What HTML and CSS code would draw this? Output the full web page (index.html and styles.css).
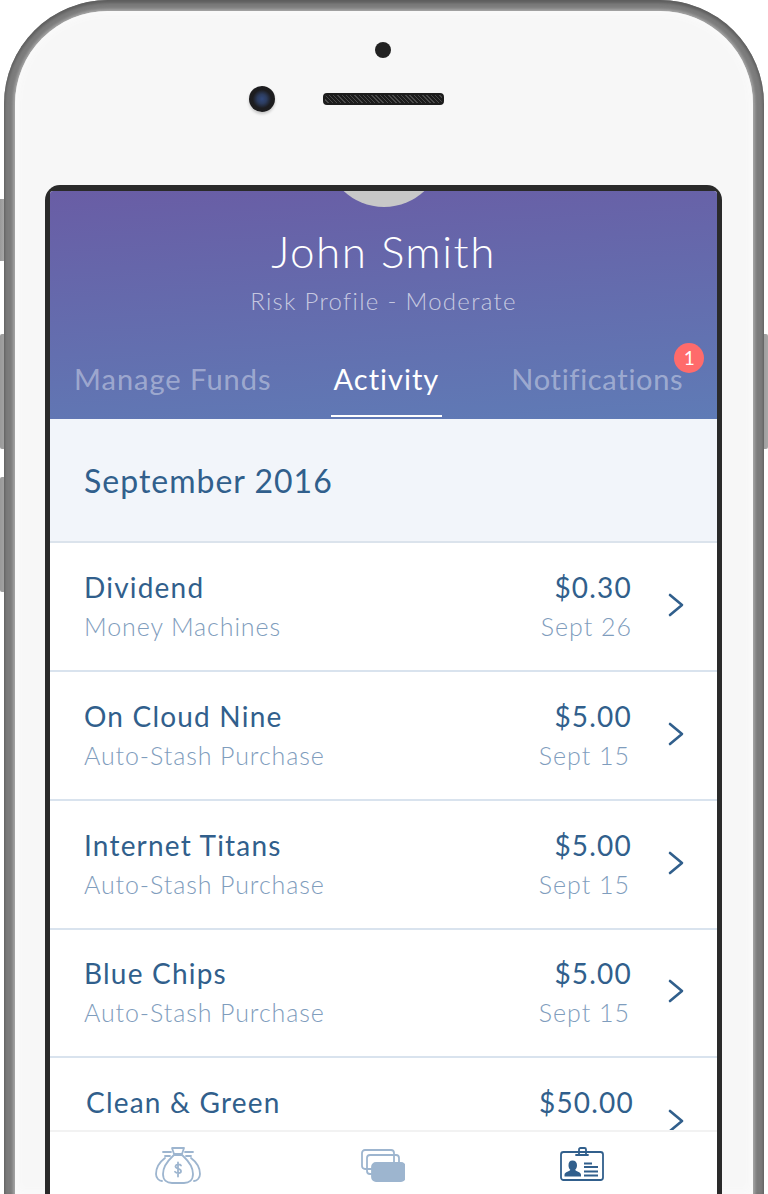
FILE: index.html
```html
<!DOCTYPE html>
<html lang="en">
  <head>
    <meta charset="UTF-8" />
    <meta name="viewport" content="width=device-width, initial-scale=1.0" />
    <title>Activity</title>
    <link rel="stylesheet" href="styles.css">
  </head>
  <body>
    <div class="side-btn side-btn-mute"></div>
    <div class="side-btn side-btn-up"></div>
    <div class="side-btn side-btn-down"></div>
    <div class="side-btn side-btn-power"></div>

    <div class="phone">
      <div class="face">
        <div class="sensors">
          <div class="front-dot"></div>
          <div class="sensor-row">
            <div class="lens"></div>
            <div class="speaker"></div>
          </div>
        </div>

        <div class="screen">
          <div class="screen-inner">
            <header class="profile">
              <div class="avatar"></div>
              <h1 class="profile-name">John Smith</h1>
              <p class="profile-risk">Risk Profile - Moderate</p>
              <nav class="tabs">
                <a class="tab tab-funds">Manage Funds</a>
                <a class="tab tab-activity">Activity</a>
                <a class="tab tab-notifications">Notifications<span class="badge">1</span></a>
              </nav>
            </header>

            <div class="month">September 2016</div>

            <div class="list">
              <div class="row row-a">
                <div class="row-left">
                  <div class="row-title">Dividend</div>
                  <div class="row-sub">Money Machines</div>
                </div>
                <div class="row-right">
                  <div class="row-amount">$0.30</div>
                  <div class="row-date">Sept 26</div>
                </div>
                <svg class="chevron" viewBox="0 0 16 24"><path d="M2 2l12 10L2 22"/></svg>
              </div>
              <div class="row row-a">
                <div class="row-left">
                  <div class="row-title">On Cloud Nine</div>
                  <div class="row-sub">Auto-Stash Purchase</div>
                </div>
                <div class="row-right row-right-15">
                  <div class="row-amount">$5.00</div>
                  <div class="row-date">Sept 15</div>
                </div>
                <svg class="chevron" viewBox="0 0 16 24"><path d="M2 2l12 10L2 22"/></svg>
              </div>
              <div class="row row-b">
                <div class="row-left">
                  <div class="row-title">Internet Titans</div>
                  <div class="row-sub">Auto-Stash Purchase</div>
                </div>
                <div class="row-right row-right-15">
                  <div class="row-amount">$5.00</div>
                  <div class="row-date">Sept 15</div>
                </div>
                <svg class="chevron" viewBox="0 0 16 24"><path d="M2 2l12 10L2 22"/></svg>
              </div>
              <div class="row row-c">
                <div class="row-left">
                  <div class="row-title">Blue Chips</div>
                  <div class="row-sub">Auto-Stash Purchase</div>
                </div>
                <div class="row-right row-right-15">
                  <div class="row-amount">$5.00</div>
                  <div class="row-date">Sept 15</div>
                </div>
                <svg class="chevron" viewBox="0 0 16 24"><path d="M2 2l12 10L2 22"/></svg>
              </div>
              <div class="row row-last">
                <div class="row-left">
                  <div class="row-title">Clean &amp; Green</div>
                </div>
                <div class="row-right">
                  <div class="row-amount">$50.00</div>
                </div>
                <svg class="chevron" viewBox="0 0 16 24"><path d="M2 2l12 10L2 22"/></svg>
              </div>
            </div>

            <div class="tabbar">
              <svg class="bar-icon icon-bag" viewBox="0 0 46 38">
                <path d="M17 1h12l-2 6h-8z"/>
                <path d="M8 5h8M38 5h-8M10 9h5M36 9h-5"/>
                <path d="M19 8c-3 3-11 9-11 19 0 6 4 9 9 9h12c5 0 9-3 9-9 0-10-8-16-11-19z"/>
                <path d="M10 11C6 14 1 20 1 27c0 4 3 7 6 7M36 11c4 3 9 9 9 16 0 4-3 7-6 7"/>
                <path d="M26 18.500c-1-1.500-5-1.500-5.500.7-.5 3 5.500 2 5.500 5 0 2.500-4.500 2.500-6 .6M23 15.500v14"/>
              </svg>
              <svg class="bar-icon icon-cards" viewBox="0 0 44 34">
                <rect class="card-line" x="1" y="1" width="32" height="19" rx="3"/>
                <rect class="card-line" x="6" y="6" width="32" height="19" rx="3"/>
                <rect class="card-fill" x="11" y="14" width="33" height="18" rx="4"/>
              </svg>
              <svg class="bar-icon icon-badge" viewBox="0 0 44 34">
                <rect x="1" y="5" width="42" height="28" rx="2.500"/>
                <path d="M16 8h12M19 8V2.500A1.500 1.500 0 0 1 20.500 1h4A1.500 1.500 0 0 1 26 2.500V8"/>
                <path class="badge-fill" d="M12.500 13.500c2.800 0 4.500 2 4.500 4.800 0 2-.8 3.600-1.800 4.500 0 1.500 5.800 2 5.800 5v1.700H4.500v-1.700c0-3 5.800-3.500 5.800-5-1-.9-1.800-2.500-1.800-4.500 0-2.800 1.200-4.800 4-4.800z"/>
                <path class="badge-lines" d="M24 16.500h8M24 20h14M24 24.500h14M24 28.500h14"/>
              </svg>
            </div>
          </div>
        </div>
      </div>
    </div>
  </body>
</html>
```

FILE: styles.css
```css
html,
body {
  margin: 0;
  height: 1194px;
  overflow: hidden;
  background-color: #fff;
}
body {
  font-family: Lato, "Open Sans", sans-serif;
  position: relative;
}

/* hardware */
.side-btn {
  position: absolute;
  background: linear-gradient(90deg, #9a9a9a, #a8a8a8);
}
.side-btn-mute {
  left: 0;
  top: 199px;
  width: 4px;
  height: 62px;
}
.side-btn-up {
  left: 0;
  top: 334px;
  width: 7px;
  height: 115px;
  border-radius: 2px;
}
.side-btn-down {
  left: 0;
  top: 477px;
  width: 7px;
  height: 115px;
  border-radius: 2px;
}
.side-btn-power {
  right: 0;
  top: 334px;
  width: 7px;
  height: 115px;
  border-radius: 2px;
}
.phone {
  margin-left: 4px;
  width: 760px;
  height: 1194px;
  padding: 11px 11px 0;
  box-sizing: border-box;
  border-radius: 104px 104px 0 0;
  background-color: #7c7c7c;
  position: relative;
  box-shadow: inset 0 2px 3px 1px #5e5e5e;
  overflow: hidden;
}
.face {
  height: 1183px;
  background-color: #f7f7f7;
  border-radius: 93px 93px 0 0;
  box-shadow: 0 0 3px 2px #a6a6a6, inset 0 0 8px 2px #fbfbfb;
}
.sensors {
  height: 174px;
  box-sizing: border-box;
  padding-top: 31px;
}
.front-dot {
  width: 16px;
  height: 16px;
  margin-left: 360px;
  border-radius: 50%;
  background-color: #222;
}
.sensor-row {
  display: flex;
  align-items: center;
  gap: 48px;
  margin-top: 28px;
  padding-left: 234px;
}
.lens {
  width: 26px;
  height: 26px;
  border-radius: 50%;
  background: radial-gradient(circle, #32497c 0, #2c3c5e 25%, #1d1d20 50%, #1c1c1c 100%);
  box-shadow: 0 2px 3px rgba(0, 0, 0, 0.2);
}
.speaker {
  width: 121px;
  height: 12px;
  border-radius: 4px;
  box-sizing: border-box;
  border: 2px solid #1c1c1c;
  background: repeating-linear-gradient(45deg, #1c1c1c 0 2px, #4a4a4a 2px 3px);
}

/* screen */
.screen {
  margin-left: 30px;
  width: 677px;
  height: 1009px;
  box-sizing: border-box;
  padding: 6px 5px 0;
  background-color: #2a2a2a;
  border-radius: 15px 15px 0 0;
}
.screen-inner {
  height: 100%;
  background-color: #fff;
  border-radius: 3px 3px 0 0;
  overflow: hidden;
}
.profile {
  height: 228px;
  overflow: hidden;
  background: linear-gradient(176deg, #695da5, #5f7bb6);
  text-align: center;
}
.avatar {
  width: 118px;
  height: 118px;
  margin: -102px auto 0;
  border-radius: 50%;
  background-color: #c8c8c8;
}
.profile-name {
  margin: 18px 0 0;
  font-size: 44px;
  line-height: 52px;
  font-weight: 300;
  letter-spacing: 1.5px;
  color: #fff;
}
.profile-risk {
  margin: 9px 0 0;
  font-size: 24px;
  line-height: 30px;
  font-weight: 300;
  letter-spacing: 1.3px;
  color: rgba(255, 255, 255, 0.65);
}
.tabs {
  display: flex;
  margin-top: 45px;
  padding-left: 24px;
  font-size: 29px;
  line-height: 36px;
  letter-spacing: 1px;
}
.tab {
  color: rgba(255, 255, 255, 0.4);
  position: relative;
  padding-bottom: 18px;
}
.tab-activity {
  margin-left: 59px;
  padding: 0 3px 18px;
  color: #fff;
  border-bottom: 2px solid #fff;
}
.tab-notifications {
  margin-left: 69px;
  letter-spacing: 0.7px;
}
.badge {
  position: absolute;
  right: -21px;
  top: -18px;
  width: 30px;
  height: 30px;
  border-radius: 50%;
  background-color: #ff6b6b;
  color: #fff;
  font-size: 19px;
  line-height: 30px;
  text-align: center;
  letter-spacing: 0;
}

/* list */
.month {
  height: 124px;
  box-sizing: border-box;
  padding: 42px 0 0 34px;
  font-size: 32px;
  line-height: 40px;
  letter-spacing: 1px;
  color: #315f8c;
  background-color: #f2f5fa;
  border-bottom: 2px solid #dbe3ec;
}
.list {
  height: 587px;
  overflow: hidden;
}
.row {
  display: flex;
  align-items: flex-start;
  box-sizing: border-box;
  padding: 26px 33px 0 34px;
  border-bottom: 2px solid #d9e3ee;
}
.row-a {
  height: 129px;
}
.row-b {
  height: 129px;
}
.row-c {
  height: 128px;
  padding-top: 25px;
}
.row-last {
  height: 74px;
  padding-left: 36px;
  border-bottom: 0;
}
.row-left {
  flex: 1;
}
.row-right {
  text-align: right;
}
.row-right-15 .row-date {
  margin-right: 2px;
}
.row-last .row-right {
  margin-right: -2px;
}
.row-title,
.row-amount {
  font-size: 28px;
  line-height: 36px;
  letter-spacing: 1.2px;
  color: #315f8c;
}
.row-sub,
.row-date {
  margin-top: 5px;
  font-size: 25px;
  line-height: 32px;
  font-weight: 300;
  letter-spacing: 0.9px;
  color: #7f9dbd;
}
.row-date {
  letter-spacing: 1px;
}
.chevron {
  width: 16px;
  height: 24px;
  margin: 24px 0 0 36px;
  fill: none;
  stroke: #315f8c;
  stroke-width: 2.6;
  stroke-linecap: round;
  stroke-linejoin: round;
}
.row-c .chevron {
  margin-top: 24px;
}
.row-last .chevron {
  margin-top: 25px;
}

/* bottom nav */
.tabbar {
  height: 70px;
  box-sizing: border-box;
  border-top: 2px solid #f2f2f2;
  background-color: #fff;
  display: flex;
  align-items: flex-start;
  padding: 15px 0 0 105px;
}
.bar-icon {
  fill: none;
  stroke: #9db5cf;
  stroke-width: 1.8;
  stroke-linejoin: round;
  stroke-linecap: round;
}
.icon-bag {
  width: 46px;
  height: 38px;
}
.icon-cards {
  width: 44px;
  height: 34px;
  margin: 2px 0 0 160px;
}
.card-fill {
  fill: #9db5cf;
  stroke: #9db5cf;
}
.icon-badge {
  width: 44px;
  height: 34px;
  margin-left: 155px;
  stroke: #315f8c;
}
.badge-fill {
  fill: #315f8c;
  stroke: none;
}
.badge-lines {
  stroke-linecap: butt;
}
```
